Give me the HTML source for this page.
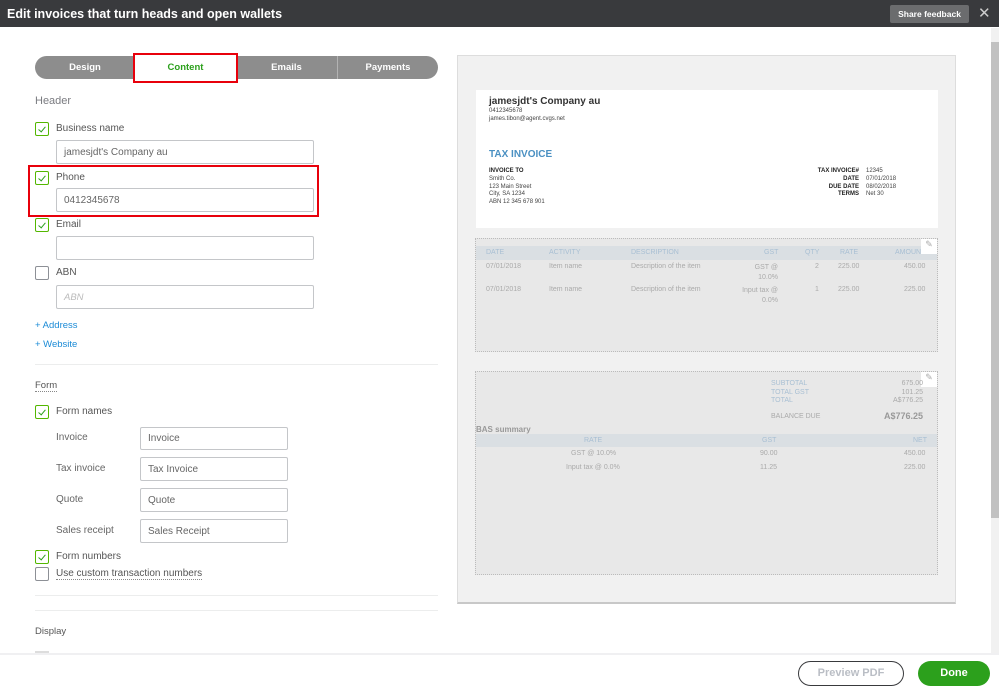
<!DOCTYPE html>
<html><head><meta charset="utf-8"><style>
*{box-sizing:border-box;margin:0;padding:0}
body{width:999px;height:690px;overflow:hidden;background:#fff;font-family:"Liberation Sans",sans-serif;position:relative;color:#555}
.a{position:absolute}
.cb{position:absolute;width:14px;height:14px;border:1px solid #8d9096;border-radius:2px;background:#fff}
.cb.on{border-color:#53b700}
.cb.on:after{content:"";position:absolute;left:4px;top:2px;width:3px;height:6px;border:solid #2ca01c;border-width:0 1.5px 1.5px 0;transform:rotate(40deg)}
.lb{position:absolute;font-size:10px;color:#555}
.in{position:absolute;border:1px solid #c4c6c9;border-radius:2px;background:#fff;font-size:10px;color:#666;padding:0 7px;display:flex;align-items:center}
.hr{position:absolute;left:35px;width:403px;height:1px;background:#eceded}
.t{position:absolute;font-size:7px;color:#aaa;white-space:nowrap}
.th{position:absolute;font-size:7px;color:#a8bfd3;white-space:nowrap}
</style></head><body>
<div class="a" style="left:0;top:0;width:999px;height:27px;background:#393a3d"></div>
<div class="a" style="left:7px;top:7px;color:#fff;font-weight:bold;font-size:12.5px">Edit invoices that turn heads and open wallets</div>
<div class="a" style="left:890px;top:5px;width:79px;height:18px;background:#6b6c6e;border-radius:2px;color:#fff;font-size:8.5px;font-weight:bold;text-align:center;line-height:18px">Share feedback</div>
<div class="a" style="left:978px;top:4px;color:#ccc;font-size:15px">✕</div>
<div class="a" style="left:991px;top:28px;width:8px;height:625px;background:#f1f1f1"></div>
<div class="a" style="left:991px;top:42px;width:8px;height:476px;background:#c1c1c1"></div>
<div class="a" style="left:35px;top:56px;width:403px;height:23px;background:#8d8d8d;border-radius:12px"></div>
<div class="a" style="left:337px;top:56px;width:1px;height:23px;background:#b3b3b3"></div>
<div class="a" style="left:35px;top:56px;width:100px;height:23px;line-height:23px;text-align:center;color:#fff;font-size:9.5px;font-weight:bold">Design</div>
<div class="a" style="left:236px;top:56px;width:101px;height:23px;line-height:23px;text-align:center;color:#fff;font-size:9.5px;font-weight:bold">Emails</div>
<div class="a" style="left:338px;top:56px;width:100px;height:23px;line-height:23px;text-align:center;color:#fff;font-size:9.5px;font-weight:bold">Payments</div>
<div class="a" style="left:135px;top:55px;width:101px;height:25px;background:#fff;line-height:25px;text-align:center;color:#2ca01c;font-size:9.5px;font-weight:bold">Content</div>
<div class="a" style="left:133px;top:53px;width:105px;height:30px;border:2px solid #e8000b"></div>
<div class="a" style="left:35px;top:95px;font-size:11px;color:#7a7b80">Header</div>
<div class="cb on" style="left:35px;top:122px"></div><div class="lb" style="left:56px;top:123px">Business name</div>
<div class="in" style="left:56px;top:140px;width:258px;height:24px">jamesjdt's Company au</div>
<div class="cb on" style="left:35px;top:171px"></div><div class="lb" style="left:56px;top:172px">Phone</div>
<div class="in" style="left:56px;top:188px;width:258px;height:24px">0412345678</div>
<div class="a" style="left:28px;top:165px;width:291px;height:52px;border:2px solid #e8000b"></div>
<div class="cb on" style="left:35px;top:218px"></div><div class="lb" style="left:56px;top:219px">Email</div>
<div class="in" style="left:56px;top:236px;width:258px;height:24px"></div>
<div class="cb" style="left:35px;top:266px"></div><div class="lb" style="left:56px;top:267px">ABN</div>
<div class="in" style="left:56px;top:285px;width:258px;height:24px;color:#bbb;font-style:italic;font-size:9.5px">ABN</div>
<div class="a" style="left:35px;top:320px;font-size:9.5px;color:#1a8ad6">+ Address</div>
<div class="a" style="left:35px;top:339px;font-size:9.5px;color:#1a8ad6">+ Website</div>
<div class="hr" style="top:364px"></div>
<div class="a" style="left:35px;top:380px;font-size:9.5px;border-bottom:1px dotted #888">Form</div>
<div class="cb on" style="left:35px;top:405px"></div><div class="lb" style="left:56px;top:406px">Form names</div>
<div class="lb" style="left:56px;top:432px;color:#666">Invoice</div><div class="in" style="left:140px;top:427px;width:148px;height:23px">Invoice</div>
<div class="lb" style="left:56px;top:463px;color:#666">Tax invoice</div><div class="in" style="left:140px;top:457px;width:148px;height:24px">Tax Invoice</div>
<div class="lb" style="left:56px;top:494px;color:#666">Quote</div><div class="in" style="left:140px;top:488px;width:148px;height:24px">Quote</div>
<div class="lb" style="left:56px;top:525px;color:#666">Sales receipt</div><div class="in" style="left:140px;top:519px;width:148px;height:24px">Sales Receipt</div>
<div class="cb on" style="left:35px;top:550px"></div><div class="lb" style="left:56px;top:551px">Form numbers</div>
<div class="cb" style="left:35px;top:567px"></div><div class="lb" style="left:56px;top:568px;border-bottom:1px dotted #888">Use custom transaction numbers</div>
<div class="hr" style="top:595px"></div><div class="hr" style="top:610px"></div>
<div class="a" style="left:35px;top:626px;font-size:9.5px">Display</div>
<div class="a" style="left:35px;top:651px;width:14px;height:2px;background:#ddd"></div>
<div class="a" style="left:457px;top:55px;width:499px;height:549px;background:#f1f1f1;border:1px solid #ddd;border-bottom:2px solid #c8c8c8"></div>
<div class="a" style="left:476px;top:90px;width:462px;height:138px;background:#fff"></div>
<div class="a" style="left:489px;top:96px;font-size:10px;font-weight:bold;color:#333">jamesjdt's Company au</div>
<div class="a" style="left:489px;top:108px;font-size:6px;color:#444">0412345678</div>
<div class="a" style="left:489px;top:116px;font-size:6px;color:#444">james.tibon@agent.cvgs.net</div>
<div class="a" style="left:489px;top:149px;font-size:10px;font-weight:bold;color:#4a90c2">TAX INVOICE</div>
<div class="a" style="left:489px;top:168px;font-size:6px;line-height:7.8px;color:#444"><b style="color:#222">INVOICE TO</b><br>Smith Co.<br>123 Main Street<br>City, SA 1234<br>ABN 12 345 678 901</div>
<div class="a" style="left:790px;top:168px;width:69px;text-align:right;font-size:6px;line-height:7.8px;font-weight:bold;color:#222">TAX INVOICE#<br>DATE<br>DUE DATE<br>TERMS</div>
<div class="a" style="left:866px;top:168px;font-size:6px;line-height:7.8px;color:#444">12345<br>07/01/2018<br>08/02/2018<br>Net 30</div>
<div class="a" style="left:475px;top:238px;width:463px;height:114px;background:#e8e8e8;border:1px dotted #bbb"></div>
<div class="a" style="left:476px;top:246px;width:461px;height:14px;background:#dadfe3"></div>
<div class="a" style="left:921px;top:239px;width:16px;height:15px;background:#fff;color:#aaa;font-size:9px;text-align:center">✎</div>
<div class="th" style="left:486px;top:249px">DATE</div><div class="th" style="left:549px;top:249px">ACTIVITY</div><div class="th" style="left:631px;top:249px">DESCRIPTION</div><div class="th" style="left:764px;top:249px">GST</div><div class="th" style="left:805px;top:249px">QTY</div><div class="th" style="left:840px;top:249px">RATE</div><div class="th" style="left:895px;top:249px">AMOUN</div>
<div class="t" style="left:486px;top:263px">07/01/2018</div><div class="t" style="left:549px;top:263px">Item name</div><div class="t" style="left:631px;top:263px">Description of the item</div><div class="t" style="left:740px;top:263px;width:38px;text-align:right;line-height:10px;white-space:normal">GST @ 10.0%</div><div class="t" style="left:815px;top:263px">2</div><div class="t" style="left:838px;top:263px">225.00</div><div class="t" style="left:904px;top:263px">450.00</div>
<div class="t" style="left:486px;top:286px">07/01/2018</div><div class="t" style="left:549px;top:286px">Item name</div><div class="t" style="left:631px;top:286px">Description of the item</div><div class="t" style="left:740px;top:286px;width:38px;text-align:right;line-height:10px;white-space:normal">Input tax @ 0.0%</div><div class="t" style="left:815px;top:286px">1</div><div class="t" style="left:838px;top:286px">225.00</div><div class="t" style="left:904px;top:286px">225.00</div>
<div class="a" style="left:475px;top:371px;width:463px;height:204px;background:#e8e8e8;border:1px dotted #bbb"></div>
<div class="a" style="left:921px;top:372px;width:16px;height:15px;background:#fff;color:#aaa;font-size:9px;text-align:center">✎</div>
<div class="th" style="left:771px;top:380px;line-height:8.7px">SUBTOTAL<br>TOTAL GST<br>TOTAL</div>
<div class="t" style="left:880px;top:380px;width:43px;text-align:right;line-height:8.7px">675.00<br>101.25<br>A$776.25</div>
<div class="t" style="left:771px;top:413px">BALANCE DUE</div>
<div class="a" style="left:860px;top:411px;width:63px;text-align:right;font-size:9px;font-weight:bold;color:#999">A$776.25</div>
<div class="a" style="left:476px;top:425px;font-size:8px;font-weight:bold;color:#999">BAS summary</div>
<div class="a" style="left:476px;top:434px;width:461px;height:13px;background:#dadfe3"></div>
<div class="th" style="left:584px;top:437px">RATE</div><div class="th" style="left:762px;top:437px">GST</div><div class="th" style="left:913px;top:437px">NET</div>
<div class="t" style="left:571px;top:450px">GST @ 10.0%</div><div class="t" style="left:760px;top:450px">90.00</div><div class="t" style="left:904px;top:450px">450.00</div>
<div class="t" style="left:566px;top:464px">Input tax @ 0.0%</div><div class="t" style="left:760px;top:464px">11.25</div><div class="t" style="left:904px;top:464px">225.00</div>
<div class="a" style="left:0;top:653px;width:999px;height:37px;background:#fff;border-top:2px solid #f0f0f2"></div>
<div class="a" style="left:798px;top:661px;width:106px;height:25px;border:1.5px solid #393a3d;border-radius:13px;text-align:center;line-height:22px;font-size:11px;font-weight:bold;color:#babec5">Preview PDF</div>
<div class="a" style="left:918px;top:661px;width:72px;height:25px;background:#2ca01c;border-radius:13px;text-align:center;line-height:25px;font-size:11px;font-weight:bold;color:#fff">Done</div>
</body></html>
